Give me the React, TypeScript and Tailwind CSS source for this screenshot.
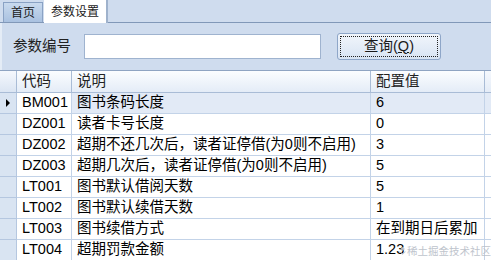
import React from "react";

const rows = [
  { code: "BM001", desc: "图书条码长度", value: "6" },
  { code: "DZ001", desc: "读者卡号长度", value: "0" },
  { code: "DZ002", desc: "超期不还几次后，读者证停借(为0则不启用)", value: "3" },
  { code: "DZ003", desc: "超期几次后，读者证停借(为0则不启用)", value: "5" },
  { code: "LT001", desc: "图书默认借阅天数", value: "5" },
  { code: "LT002", desc: "图书默认续借天数", value: "1" },
  { code: "LT003", desc: "图书续借方式", value: "在到期日后累加" },
  { code: "LT004", desc: "超期罚款金额", value: "1.23" },
];

const font = "font-['Liberation_Sans','Noto_Sans_CJK_SC',sans-serif]";

function HeaderCell({ children }: { children?: React.ReactNode }) {
  return (
    <div className="h-[22px] flex items-center pl-[5px] border-r border-b border-[#a9bcd6] bg-gradient-to-b from-[#fbfdff] to-[#e4ecf7] text-[#222] whitespace-nowrap overflow-hidden">
      {children}
    </div>
  );
}

function Cell({ children, selected, focused }: { children?: React.ReactNode; selected?: boolean; focused?: boolean }) {
  const bg = focused ? "bg-white" : selected ? "bg-[#e2eaf6]" : "bg-white";
  return (
    <div className={`h-[21px] flex items-center pl-[5px] border-r border-b border-[#c3d3e8] ${bg} text-black whitespace-nowrap overflow-hidden`}>
      {children}
    </div>
  );
}

export default function App() {
  return (
    <div className={`w-[491px] h-[260px] overflow-hidden bg-[#cfdcee] relative ${font}`}>
      {/* tab strip */}
      <div className="h-[23px] flex items-end border-b border-[#8198b8]">
        <div className="ml-[3px] w-[40px] h-[20px] flex items-center justify-center border border-b-0 border-[#8aa2c4] bg-gradient-to-b from-[#c9daee] to-[#a9c1e0] text-[12px] text-[#1a1a1a]">
          首页
        </div>
        <div className="ml-[1px] w-[64px] h-[23px] -mb-px relative flex items-center justify-center bg-white border-r-2 border-[#9fb2cc] text-[12px] text-[#1a1a1a]">
          参数设置
        </div>
      </div>

      {/* search panel */}
      <div className="h-[47px] flex items-center border-l-2 border-[#e4ecf6]">
        <span className="w-[69px] pl-[11px] text-[14.5px] text-[#222] whitespace-nowrap">参数编号</span>
        <div className="ml-[13px] w-[237px] h-[25px] bg-white border border-[#9fb3cf]" />
        <button className="ml-[16px] w-[104px] h-[27px] rounded-[3px] border border-[#8ea6c8] bg-gradient-to-b from-[#f1f5fb] to-[#d8e4f3] p-[2px]">
          <div className="w-full h-full border border-dotted border-[#222] flex items-center justify-center text-[14.5px] text-[#1a1a1a]">
            查询(<span className="underline">Q</span>)
          </div>
        </button>
      </div>

      {/* grid */}
      <div className="border-t border-[#8fa4c2] grid grid-cols-[17px_55px_299px_114px_1fr] text-[14.5px]">
        <div className="h-[22px] border-r border-b border-[#a9bcd6] bg-gradient-to-b from-[#f5f8fd] to-[#dbe5f3]" />
        <HeaderCell>代码</HeaderCell>
        <HeaderCell>说明</HeaderCell>
        <HeaderCell>配置值</HeaderCell>
        <div className="h-[22px] border-b border-[#a9bcd6] bg-gradient-to-b from-[#f5f8fd] to-[#e4ecf7]" />
        {rows.map((r, i) => (
          <React.Fragment key={r.code}>
            <div className="h-[21px] flex items-center justify-center border-r border-b border-[#b5c7e0] bg-[#d9e4f2]">
              {i === 0 && (
                <svg width="5" height="8" viewBox="0 0 5 8">
                  <path d="M0 0 L4 4 L0 8 Z" fill="#000" />
                </svg>
              )}
            </div>
            <Cell focused={i === 0}>{r.code}</Cell>
            <Cell selected={i === 0}>{r.desc}</Cell>
            <Cell selected={i === 0}>{r.value}</Cell>
            <div className={`h-[21px] border-b border-[#c3d3e8] ${i === 0 ? "bg-[#e2eaf6]" : "bg-white"}`} />
          </React.Fragment>
        ))}
      </div>

      {/* watermark */}
      <div className="absolute right-0 bottom-[1px] flex items-center gap-[1px] text-[10.5px] text-[#b9bec8] opacity-90 whitespace-nowrap font-['Noto_Sans_CJK_SC',sans-serif]">
        <svg width="7" height="8" viewBox="0 0 7 8">
          <path d="M3.5 0 L6 2 L3.5 4 L1 2 Z M0.5 4 L3.5 6.5 L6.5 4 L6.5 5 L3.5 7.8 L0.5 5 Z" fill="#b9bec8" />
        </svg>
        稀土掘金技术社区
      </div>
    </div>
  );
}
